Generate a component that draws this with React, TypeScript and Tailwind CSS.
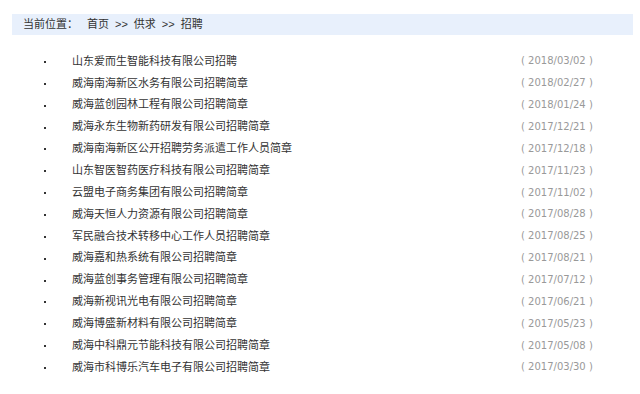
import React from 'react';

const jobs = [
  { title: '山东爱而生智能科技有限公司招聘', date: '2018/03/02' },
  { title: '威海南海新区水务有限公司招聘简章', date: '2018/02/27' },
  { title: '威海蓝创园林工程有限公司招聘简章', date: '2018/01/24' },
  { title: '威海永东生物新药研发有限公司招聘简章', date: '2017/12/21' },
  { title: '威海南海新区公开招聘劳务派遣工作人员简章', date: '2017/12/18' },
  { title: '山东智医智药医疗科技有限公司招聘简章', date: '2017/11/23' },
  { title: '云盟电子商务集团有限公司招聘简章', date: '2017/11/02' },
  { title: '威海天恒人力资源有限公司招聘简章', date: '2017/08/28' },
  { title: '军民融合技术转移中心工作人员招聘简章', date: '2017/08/25' },
  { title: '威海嘉和热系统有限公司招聘简章', date: '2017/08/21' },
  { title: '威海蓝创事务管理有限公司招聘简章', date: '2017/07/12' },
  { title: '威海新视讯光电有限公司招聘简章', date: '2017/06/21' },
  { title: '威海博盛新材料有限公司招聘简章', date: '2017/05/23' },
  { title: '威海中科鼎元节能科技有限公司招聘简章', date: '2017/05/08' },
  { title: '威海市科博乐汽车电子有限公司招聘简章', date: '2017/03/30' },
];

export default function App() {
  return (
    <div
      className="w-[640px] h-[394px] bg-white pt-[14px] text-[#333]"
      style={{ fontFamily: '"Liberation Sans", "Noto Sans CJK SC", sans-serif' }}
    >
      {/* breadcrumb */}
      <div className="mx-[12px] w-[621px] h-[21px] bg-[#e8f0fc] flex items-center pl-[11px] text-[11px]">
        <span>当前位置：</span>
        <span className="ml-[9px]">首页</span>
        <span className="mx-[6px]">&gt;&gt;</span>
        <span>供求</span>
        <span className="mx-[6px]">&gt;&gt;</span>
        <span>招聘</span>
      </div>

      <ul className="mt-[15px]">
        {jobs.map(job => (
          <li key={job.title} className="h-[21.86px] flex items-center text-[11px]">
            <span className="w-[2px] h-[2px] bg-[#333] ml-[44px] mr-[26px] mt-[2px]"></span>
            <span className="w-[449px] truncate">{job.title}</span>
            <span
              className="text-[10px] text-[#999] whitespace-pre"
              style={{ fontFamily: '"DejaVu Sans", sans-serif' }}
            >
              ( {job.date} )
            </span>
          </li>
        ))}
      </ul>
    </div>
  );
}
